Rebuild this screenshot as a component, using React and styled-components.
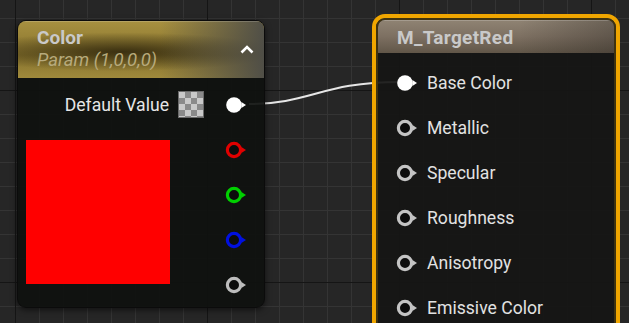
import React from 'react';
import styled, { createGlobalStyle } from 'styled-components';

const GlobalStyle = createGlobalStyle`
  html, body {
    margin: 0;
    padding: 0;
    background: #262626;
    overflow: hidden;
  }
  body {
    font-family: Roboto, "Liberation Sans", sans-serif;
  }
`;

// холст графа с сеткой
const Canvas = styled.div`
  position: relative;
  width: 629px;
  height: 323px;
  overflow: hidden;
  background-color: #262626;
  background-image:
    linear-gradient(to right, #151515 1px, transparent 1px),
    linear-gradient(to bottom, #151515 1px, transparent 1px),
    linear-gradient(to right, #343434 1px, transparent 1px),
    linear-gradient(to bottom, #343434 1px, transparent 1px);
  background-size: 192px 192px, 192px 192px, 24px 24px, 24px 24px;
  background-position: 207px 90px, 207px 90px, 15px 18px, 15px 18px;
`;

const Wires = styled.svg`
  position: absolute;
  left: 0;
  top: 0;
  width: 629px;
  height: 323px;
`;

// узел "Color"
const ParamNode = styled.div`
  position: absolute;
  left: 17px;
  top: 20px;
  width: 248px;
  height: 288px;
  box-sizing: border-box;
  border: 1px solid #0b0b0b;
  border-radius: 9px;
  overflow: hidden;
  box-shadow: 0 2px 6px rgba(0, 0, 0, 0.55);
  display: flex;
  flex-direction: column;
  background: rgba(15, 17, 15, 0.93);
`;

const ParamHeader = styled.div`
  height: 57px;
  flex-shrink: 0;
  position: relative;
  padding: 6px 0 0 19px;
  box-sizing: border-box;
  background:
    linear-gradient(to right, rgba(70, 70, 66, 0) 58%, rgba(76, 76, 72, 0.95) 100%),
    radial-gradient(ellipse 65% 34% at 42% 54%, rgba(45, 36, 12, 0.85) 0%, rgba(45, 36, 12, 0) 100%),
    linear-gradient(to bottom, #a89140 0%, #927d34 40%, #85712c 60%, #a08a3c 100%);
  box-shadow: inset 0 1px 0 rgba(255, 255, 255, 0.18);
`;

const Title = styled.div`
  font-size: 19px;
  font-weight: 700;
  color: #c9c9c9;
  line-height: 22px;
  letter-spacing: ${p => p.spread || 0}px;
`;

const Subtitle = styled.div`
  font-size: 18.5px;
  font-style: italic;
  color: #b7aa7c;
  line-height: 22px;
  margin-top: 0;
`;

const Collapse = styled.svg`
  position: absolute;
  right: 10px;
  top: 24px;
`;

const ParamBody = styled.div`
  flex: 1;
  display: flex;
`;

const ContentCol = styled.div`
  flex: 1;
  display: flex;
  flex-direction: column;
`;

const DefaultRow = styled.div`
  height: 45px;
  margin-top: 4px;
  display: flex;
  align-items: center;
  justify-content: flex-end;
  padding-right: 12px;
  gap: 9px;
  font-size: 17.6px;
  color: #e6e6e6;
`;

const Swatch = styled.div`
  width: 24px;
  height: 25px;
  border: 1px solid #6a6a6a;
  background-color: #c9c9c9;
  background-image:
    linear-gradient(45deg, #8a8a8a 25%, transparent 25%, transparent 75%, #8a8a8a 75%),
    linear-gradient(45deg, #8a8a8a 25%, transparent 25%, transparent 75%, #8a8a8a 75%);
  background-size: 12px 12px;
  background-position: 0 0, 6px 6px;
`;

const Preview = styled.div`
  width: 144px;
  height: 144px;
  margin: 13px 0 0 8px;
  background: ${p => p.color};
`;

const PinCol = styled.div`
  width: 48px;
  padding: 4px 0 0 9px;
  box-sizing: border-box;
  display: flex;
  flex-direction: column;
`;

const PinRow = styled.div`
  height: 45px;
  display: flex;
  align-items: center;
  gap: 9px;
  font-size: 17.6px;
  color: #e2e2e2;
`;

// выбранный узел материала
const SelectFrame = styled.div`
  position: absolute;
  left: 372px;
  top: 14px;
  width: 248px;
  height: 340px;
  box-sizing: border-box;
  border: 4px solid #f0a600;
  border-radius: 13px;
  overflow: hidden;
`;

const MaterialNode = styled.div`
  height: 100%;
  box-sizing: border-box;
  border: 2px solid #3e3210;
  border-radius: 9px;
  overflow: hidden;
  background: rgba(21, 22, 20, 0.93);
`;

const MaterialHeader = styled.div`
  height: 33px;
  padding: 2px 0 0 19px;
  box-sizing: border-box;
  display: flex;
  align-items: center;
  background:
    linear-gradient(to right, rgba(0, 0, 0, 0) 60%, rgba(40, 36, 32, 0.35) 100%),
    linear-gradient(to bottom, #8f8373 0%, #7d7062 50%, #615648 100%);
  box-shadow: inset 0 1px 0 rgba(255, 255, 255, 0.2);
`;

const MaterialBody = styled.div`
  padding: 7px 0 0 18px;
  display: flex;
  flex-direction: column;
`;

const Pin = ({ color, connected }) => (
  <svg width="22" height="18" viewBox="0 0 22 18" style={{ flexShrink: 0 }}>
    {connected ? (
      <circle cx="9" cy="9" r="7.8" fill={color} />
    ) : (
      <circle cx="9" cy="9" r="6.6" fill="#0c0c0c" stroke={color} strokeWidth="3.2" />
    )}
    <polygon points="16.4,6 21,9 16.4,12" fill={color} />
  </svg>
);

const paramPins = ['#ffffff', '#e00000', '#00d000', '#0010e0', '#bdbdbd'];
const inputs = ['Base Color', 'Metallic', 'Specular', 'Roughness', 'Anisotropy', 'Emissive Color'];

const App = () => (
  <>
    <GlobalStyle />
    <Canvas>
      <Wires viewBox="0 0 629 323">
        <path d="M249 104 C 310 104, 322 82, 399 82" stroke="#e6e6e6" strokeWidth="2" fill="none" />
      </Wires>

      <ParamNode>
        <ParamHeader>
          <Title>Color</Title>
          <Subtitle>Param (1,0,0,0)</Subtitle>
          <Collapse width="14" height="9" viewBox="0 0 14 9">
            <polyline points="1.5,7.5 7,2 12.5,7.5" stroke="#ffffff" strokeWidth="2.6" fill="none" />
          </Collapse>
        </ParamHeader>
        <ParamBody>
          <ContentCol>
            <DefaultRow>
              Default Value
              <Swatch />
            </DefaultRow>
            <Preview color="#ff0000" />
          </ContentCol>
          <PinCol>
            {paramPins.map((c, i) => (
              <PinRow key={c}>
                <Pin color={c} connected={i === 0} />
              </PinRow>
            ))}
          </PinCol>
        </ParamBody>
      </ParamNode>

      <SelectFrame>
        <MaterialNode>
          <MaterialHeader>
            <Title spread={0.3}>M_TargetRed</Title>
          </MaterialHeader>
          <MaterialBody>
            {inputs.map((name, i) => (
              <PinRow key={name}>
                <Pin color={i === 0 ? '#ffffff' : '#c4c4c4'} connected={i === 0} />
                {name}
              </PinRow>
            ))}
          </MaterialBody>
        </MaterialNode>
      </SelectFrame>
    </Canvas>
  </>
);

export default App;
